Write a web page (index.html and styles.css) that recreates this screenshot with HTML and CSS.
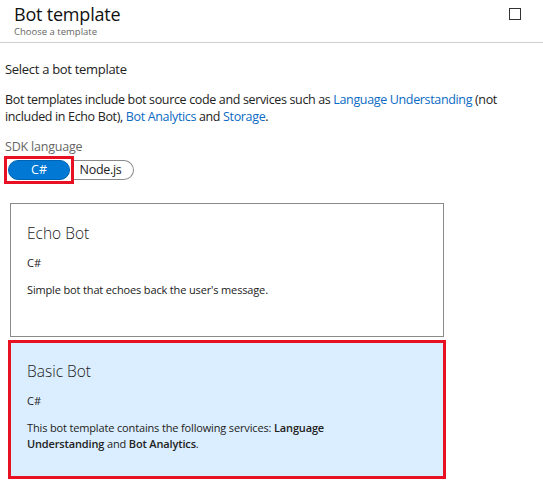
FILE: index.html
```html
<!DOCTYPE html>
<html>
<head>
<meta charset="utf-8">
<link rel="stylesheet" href="styles.css">
</head>
<body>
<div class="header">
  <div class="titles">
    <div class="title">Bot template</div>
    <div class="subtitle">Choose a template</div>
  </div>
  <div class="maximize"></div>
</div>
<div class="content">
  <div class="heading">Select a bot template</div>
  <p class="desc">Bot templates include bot source code and services such as <a class="link">Language Understanding</a> (not included in Echo Bot), <a class="link">Bot Analytics</a> and <a class="link">Storage</a>.</p>
  <div class="label">SDK language</div>
  <div class="toggle">
    <div class="highlight"><span class="opt active">C#</span></div>
    <span class="opt other">Node.js</span>
  </div>
  <div class="card">
    <div class="card-title">Echo Bot</div>
    <div class="card-lang">C#</div>
    <div class="card-text">Simple bot that echoes back the user's message.</div>
  </div>
  <div class="card selected">
    <div class="card-title">Basic Bot</div>
    <div class="card-lang">C#</div>
    <div class="card-text">This bot template contains the following services: <b>Language Understanding</b> and <b>Bot Analytics</b>.</div>
  </div>
</div>
</body>
</html>
```
FILE: styles.css
```css
* { box-sizing: border-box; }
body {
  margin: 0;
  font-family: "Open Sans", "Noto Sans", sans-serif;
  color: #222;
  background: #fff;
  width: 543px;
}
.header {
  display: flex;
  justify-content: space-between;
  align-items: flex-start;
  height: 43px;
  padding: 2px 22px 0 14px;
  border-bottom: 1px solid #cfcfcf;
}
.title {
  font-size: 18px;
  line-height: 24px;
  color: #111;
  letter-spacing: -0.2px;
}
.subtitle {
  font-size: 9.5px;
  line-height: 12px;
  color: #666;
}
.maximize {
  width: 12px;
  height: 12px;
  border: 1px solid #333;
  margin-top: 6px;
}
.content {
  padding: 0 0 0 5px;
}
.heading {
  font-size: 13px;
  line-height: 18px;
  margin-top: 17px;
  letter-spacing: -0.3px;
}
.desc {
  font-size: 12.5px;
  line-height: 17px;
  margin: 13px 0 0;
  width: 535px;
  letter-spacing: -0.35px;
}
.link { color: #0b6ac4; }
.label {
  font-size: 12.5px;
  line-height: 16px;
  color: #666;
  margin-top: 14px;
  letter-spacing: -0.2px;
}
.toggle {
  display: flex;
  align-items: center;
  margin-top: 1px;
}
.highlight {
  border: 3px solid #e81123;
  padding: 1px;
  margin-left: -1px;
  display: flex;
}
.opt {
  height: 20px;
  font-size: 12.5px;
  line-height: 18px;
  display: flex;
  align-items: center;
  justify-content: center;
}
.active {
  width: 62px;
  background: #0078d4;
  color: #fff;
  border-radius: 10px;
  border: 1px solid #0063b1;
}
.other {
  width: 60px;
  padding-right: 6px;
  border: 1px solid #8a8a8a;
  border-left: none;
  border-radius: 0 10px 10px 0;
  color: #222;
  letter-spacing: -0.3px;
}
.card {
  width: 434px;
  height: 134px;
  margin: 19px 0 0 5px;
  border: 1px solid #8a8a8a;
  padding: 18px 16px 0;
}
.card.selected {
  width: 438px;
  height: 139px;
  margin: 3px 0 0 3px;
  border: 3px solid #e81123;
  background: #dbeeff;
  padding: 17px 16px 0;
}
.card-title {
  font-size: 15.5px;
  font-weight: 300;
  line-height: 22px;
  color: #222;
}
.card-lang {
  font-size: 11px;
  line-height: 14px;
  margin-top: 12px;
}
.card-text {
  font-size: 11px;
  line-height: 16px;
  margin-top: 12px;
  width: 320px;
  letter-spacing: -0.15px;
}
.card-text b { font-weight: 600; }
```
